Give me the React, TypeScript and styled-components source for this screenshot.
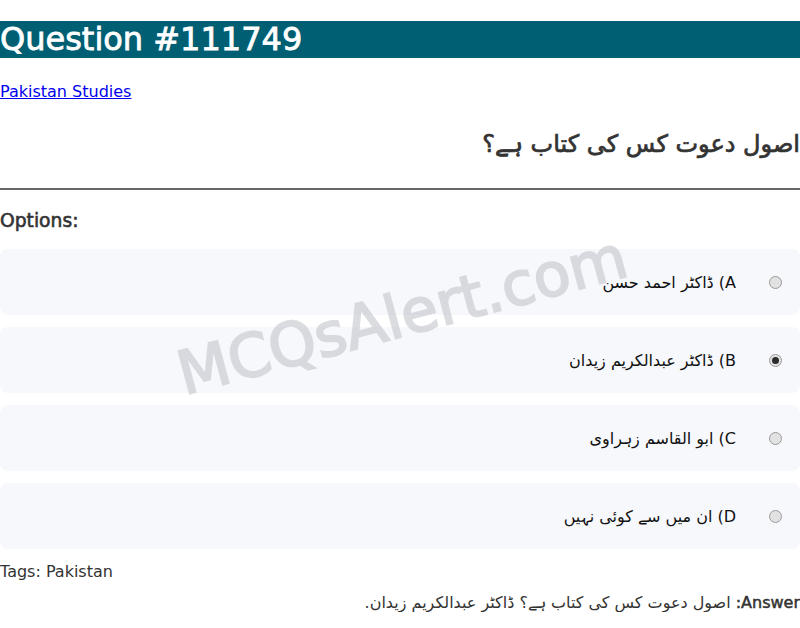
import React from "react";
import styled, { createGlobalStyle } from "styled-components";

const GlobalStyle = createGlobalStyle`
  html, body {
    margin: 0;
    padding: 0;
    background: #ffffff;
    font-family: "DejaVu Sans", sans-serif;
  }
`;

// the bold text in the picture keeps the regular widths, so it is drawn
// with the regular face and a thin stroke
const Page = styled.div`
  position: relative;
  overflow: hidden;
  color: #333333;
`;

const Title = styled.h1`
  margin: 21px 0 0;
  background: #005f73;
  color: #ffffff;
  font-size: 32px;
  font-weight: normal;
  -webkit-text-stroke: 0.8px #ffffff;
  line-height: 37px;
`;

const Category = styled.p`
  margin: 24px 0 0;
  font-size: 16px;
  line-height: 19px;
  a {
    color: #0000ee;
  }
`;

const QuestionText = styled.h2`
  margin: 28px 0 0;
  direction: rtl;
  text-align: right;
  font-size: 24px;
  font-weight: normal;
  -webkit-text-stroke: 0.7px #333333;
  line-height: 30px;
  color: #333333;
`;

const Divider = styled.hr`
  margin: 29px 0 0;
  border: none;
  border-top: 2px solid #666666;
`;

const OptionsLabel = styled.h3`
  margin: 20px 0 0;
  font-size: 18.72px;
  font-weight: normal;
  -webkit-text-stroke: 0.6px #333333;
  line-height: 22px;
  color: #333333;
`;

const OptionList = styled.div`
  display: flex;
  flex-direction: column;
  gap: 12px;
  margin-top: 17px;
`;

const OptionCard = styled.label`
  display: flex;
  flex-direction: row-reverse;
  align-items: center;
  gap: 33px;
  height: 66px;
  padding: 0 18px 0 0;
  background: #f7f8fc;
  border-radius: 8px;
  box-sizing: border-box;
`;

const OptionText = styled.span`
  direction: rtl;
  font-size: 16px;
  color: #111111;
`;

const Radio = styled.span<{ $checked?: boolean }>`
  position: relative;
  flex: none;
  width: 13px;
  height: 13px;
  box-sizing: border-box;
  border-radius: 50%;
  border: 1px solid #9a9a9a;
  background: #e2e2e2;
  &::after {
    content: "";
    position: absolute;
    left: 2px;
    top: 2px;
    width: 7px;
    height: 7px;
    border-radius: 50%;
    background: ${(p) => (p.$checked ? "#2b2b2b" : "transparent")};
  }
`;

const Tags = styled.p`
  margin: 13px 0 0;
  font-size: 16px;
  line-height: 19px;
  color: #333333;
`;

const Answer = styled.p`
  margin: 12px 0 0;
  direction: rtl;
  text-align: right;
  font-size: 16px;
  line-height: 19px;
  color: #333333;
  strong {
    font-weight: normal;
    -webkit-text-stroke: 0.5px #333333;
  }
`;

const Watermark = styled.div`
  position: absolute;
  left: 402px;
  top: 315px;
  font-size: 60px;
  font-weight: normal;
  color: rgb(196, 198, 204);
  -webkit-text-stroke: 2px rgb(196, 198, 204);
  opacity: 0.6;
  transform: translate(-50%, -50%) rotate(-15deg);
  pointer-events: none;
  white-space: nowrap;
`;

const options = [
  { key: "A", text: "ڈاکٹر احمد حسن" },
  { key: "B", text: "ڈاکٹر عبدالکریم زیدان" },
  { key: "C", text: "ابو القاسم زہراوی" },
  { key: "D", text: "ان میں سے کوئی نہیں" },
];

export default function App() {
  return (
    <Page>
      <GlobalStyle />
      <Title>Question #111749</Title>
      <Category>
        <a href="#">Pakistan Studies</a>
      </Category>
      <QuestionText>اصول دعوت کس کی کتاب ہے؟</QuestionText>
      <Divider />
      <OptionsLabel>Options:</OptionsLabel>
      <OptionList>
        {options.map((o) => (
          <OptionCard key={o.key}>
            <Radio $checked={o.key === "B"} />
            <OptionText>{o.key}) {o.text}</OptionText>
          </OptionCard>
        ))}
      </OptionList>
      <Tags>Tags: Pakistan</Tags>
      <Answer>
        <strong>Answer:</strong> اصول دعوت کس کی کتاب ہے؟ ڈاکٹر عبدالکریم زیدان.
      </Answer>
      <Watermark>MCQsAlert.com</Watermark>
    </Page>
  );
}
